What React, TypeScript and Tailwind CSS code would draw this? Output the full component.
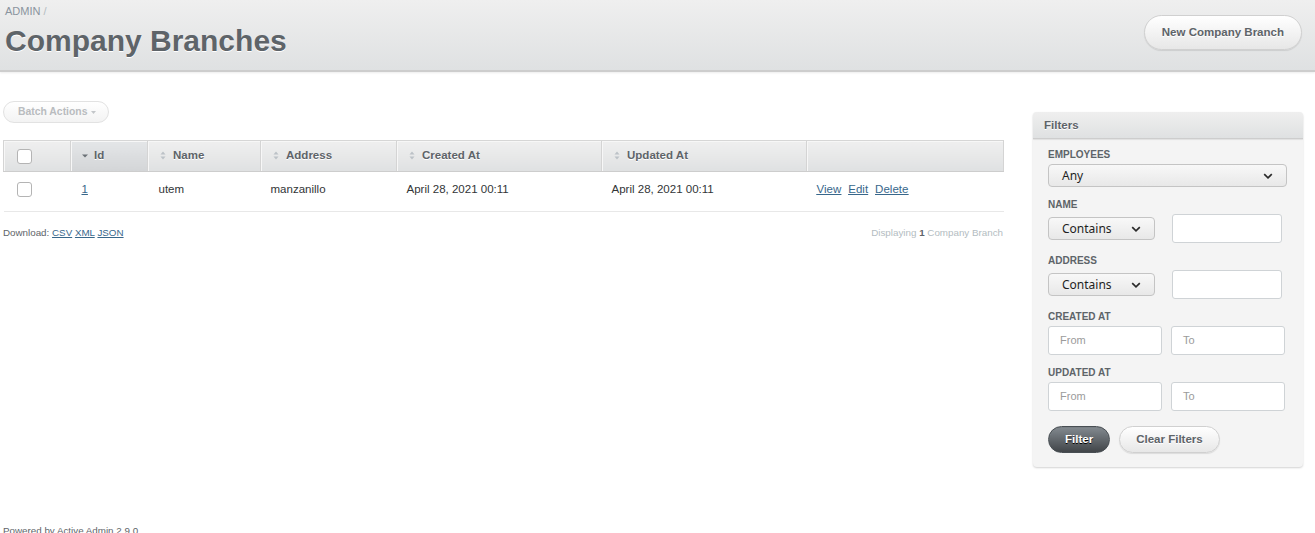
import React from 'react';

const SortBoth = () => (
  <svg width="6" height="9" viewBox="0 0 6 9" className="shrink-0">
    <path d="M3 0.5L5.5 3.5H0.5Z M0.5 5.5H5.5L3 8.5Z" fill="#bcc2c7" />
  </svg>
);

const SortDesc = () => (
  <svg width="6" height="4" viewBox="0 0 6 4" className="shrink-0">
    <path d="M0 0.5H6L3 3.5Z" fill="#6b7177" />
  </svg>
);

const Chevron = () => (
  <svg width="10" height="6" viewBox="0 0 10 6" className="shrink-0">
    <path d="M1.2 1.2L5 4.8L8.8 1.2" fill="none" stroke="#2a2a2a" strokeWidth="1.7" />
  </svg>
);

const Checkbox = () => (
  <span className="block w-[15px] h-[15px] rounded-[3px] border border-[#b4b4b4] bg-white" />
);

const Label = ({ children }: { children: React.ReactNode }) => (
  <div className="text-[10px] leading-[14px] font-bold uppercase text-[#5e6469] mb-[2px]">{children}</div>
);

const Select = ({ value, width }: { value: string; width: string }) => (
  <div
    className={`${width} h-[23px] shrink-0 rounded-[4px] border border-[#c4c4c4] bg-[linear-gradient(180deg,#f8f8f8,#e8e8e8)] flex items-center justify-between pl-[13px] pr-[13px] font-['Noto_Sans',sans-serif] text-[12px] text-[#1f1f1f]`}
  >
    <span>{value}</span>
    <Chevron />
  </div>
);

const Input = ({ placeholder, width }: { placeholder?: string; width: string }) => (
  <div
    className={`${width} h-[29px] shrink-0 rounded-[3px] border border-[#cfd3d6] bg-white flex items-center pl-[11px] text-[11px] text-[#9b9b9b]`}
  >
    {placeholder}
  </div>
);

const columns = [
  { label: 'Id', sorted: true },
  { label: 'Name' },
  { label: 'Address' },
  { label: 'Created At' },
  { label: 'Updated At' },
];

const thBase =
  'h-[31px] p-0 text-left align-middle border-t border-b border-l border-t-[#d6d6d6] border-b-[#cdcdcd] border-l-[#d4d4d4] shadow-[inset_1px_1px_0_#f7f7f7]';

export default function App() {
  return (
    <div className="min-h-[533px] bg-white font-['Liberation_Sans',Arial,sans-serif] text-[#323537]">
      {/* title bar */}
      <div className="h-[72px] flex justify-between pl-[5px] pr-[13px] border-b-2 border-[#cdcdcd] bg-[linear-gradient(180deg,#efefef,#dfe1e2)] shadow-[0_1px_2px_rgba(0,0,0,0.08)]">
        <div className="pt-[5px]">
          <div className="text-[11px] leading-[13px] text-[#8a949e]">
            ADMIN <span className="text-[#b3bcc1]">/</span>
          </div>
          <h2 className="mt-[8px] text-[30px] leading-[30px] font-bold text-[#5e6469] [text-shadow:0_1px_0_#fff]">
            Company Branches
          </h2>
        </div>
        <div className="pt-[15px]">
          <a className="flex items-center h-[35px] px-[17px] rounded-full border border-[#d0d0d0] bg-[linear-gradient(180deg,#ffffff,#e7e7e7)] shadow-[0_1px_1px_rgba(0,0,0,0.1)] text-[11.52px] font-bold text-[#5e6469] [text-shadow:0_1px_0_#fff]">
            New Company Branch
          </a>
        </div>
      </div>

      {/* main */}
      <div className="flex items-start pl-[3px] pr-[12px]">
        <div className="w-[1000px] pt-[29px]">
          <div className="w-[106px] h-[22px] rounded-full border border-[#e2e2e2] bg-[linear-gradient(180deg,#ffffff,#f3f3f3)] flex items-center pl-[14px] gap-[4px] text-[10.4px] font-bold text-[#b9bcbf]">
            Batch Actions
            <svg width="5" height="3" viewBox="0 0 5 3">
              <path d="M0 0H5L2.5 3Z" fill="#c3c6c9" />
            </svg>
          </div>

          <table className="mt-[17px] w-[1000px] table-fixed border-collapse">
            <colgroup>
              <col className="w-[67px]" />
              <col className="w-[77px]" />
              <col className="w-[113px]" />
              <col className="w-[136px]" />
              <col className="w-[205px]" />
              <col className="w-[205px]" />
              <col className="w-[197px]" />
            </colgroup>
            <thead>
              <tr className="text-[11.52px] font-bold text-[#5e6469] [text-shadow:0_1px_0_#fff]">
                <th className={`${thBase} pl-[13px] bg-[linear-gradient(180deg,#efefef,#dfe1e2)]`}>
                  <Checkbox />
                </th>
                {columns.map((c) => (
                  <th
                    key={c.label}
                    className={`${thBase} ${
                      c.sorted
                        ? 'pl-[11px] bg-[linear-gradient(180deg,#e4e6e8,#d3d5d7)]'
                        : 'pl-[12px] bg-[linear-gradient(180deg,#efefef,#dfe1e2)]'
                    }`}
                  >
                    <div className={`flex items-center ${c.sorted ? 'gap-[6px]' : 'gap-[7px]'}`}>
                      {c.sorted ? <SortDesc /> : <SortBoth />}
                      <span>{c.label}</span>
                    </div>
                  </th>
                ))}
                <th className={`${thBase} border-r border-r-[#d4d4d4] bg-[linear-gradient(180deg,#efefef,#dfe1e2)]`} />
              </tr>
            </thead>
            <tbody>
              <tr className="text-[11.52px] leading-[16px] text-[#323537]">
                <td className="h-[40px] align-top pt-[10px] pl-[13px] border-b border-[#e8e8e8]">
                  <Checkbox />
                </td>
                <td className="h-[40px] align-top pt-[9px] pl-[11px] border-b border-[#e8e8e8]">
                  <a className="text-[#38678b] underline">1</a>
                </td>
                <td className="align-top pt-[9px] pl-[11px] border-b border-[#e8e8e8]">utem</td>
                <td className="align-top pt-[9px] pl-[10px] border-b border-[#e8e8e8]">manzanillo</td>
                <td className="align-top pt-[9px] pl-[10px] border-b border-[#e8e8e8]">April 28, 2021 00:11</td>
                <td className="align-top pt-[9px] pl-[10px] border-b border-[#e8e8e8]">April 28, 2021 00:11</td>
                <td className="align-top pt-[9px] pl-[10px] border-b border-[#e8e8e8]">
                  <div className="flex gap-[7px] text-[#38678b] underline">
                    <a>View</a>
                    <a>Edit</a>
                    <a>Delete</a>
                  </div>
                </td>
              </tr>
            </tbody>
          </table>

          <div className="mt-[14px] flex justify-between text-[9.8px] leading-[14px]">
            <div className="text-[#5e6469]">
              Download:{' '}
              <a className="text-[#38678b] underline">CSV</a>{' '}
              <a className="text-[#38678b] underline">XML</a>{' '}
              <a className="text-[#38678b] underline">JSON</a>
            </div>
            <div className="text-[#b3bcc1]">
              Displaying <b className="text-[#5e6469]">1</b> Company Branch
            </div>
          </div>
        </div>

        {/* sidebar */}
        <div className="w-[270px] ml-[30px] mt-[40px] rounded-[4px] bg-[#f4f4f4] shadow-[0_1px_2px_rgba(0,0,0,0.18)]">
          <h3 className="h-[27px] leading-[27px] px-[11px] rounded-t-[4px] border-b border-[#cdcdcd] bg-[linear-gradient(180deg,#efefef,#dfe1e2)] text-[11.52px] font-bold text-[#5e6469] [text-shadow:0_1px_0_#fff] shadow-[0_1px_1px_rgba(0,0,0,0.08)]">
            Filters
          </h3>
          <div className="px-[15px] pt-[9px] pb-[14px]">
            <Label>Employees</Label>
            <Select value="Any" width="w-[239px]" />

            <div className="mt-[11px]">
              <Label>Name</Label>
              <div className="flex items-center">
                <Select value="Contains" width="w-[107px]" />
                <div className="ml-[17px]">
                  <Input width="w-[110px]" />
                </div>
              </div>
            </div>

            <div className="mt-[11px]">
              <Label>Address</Label>
              <div className="flex items-center">
                <Select value="Contains" width="w-[107px]" />
                <div className="ml-[17px]">
                  <Input width="w-[110px]" />
                </div>
              </div>
            </div>

            <div className="mt-[11px]">
              <Label>Created At</Label>
              <div className="flex gap-[9px]">
                <Input placeholder="From" width="w-[114px]" />
                <Input placeholder="To" width="w-[114px]" />
              </div>
            </div>

            <div className="mt-[11px]">
              <Label>Updated At</Label>
              <div className="flex gap-[9px]">
                <Input placeholder="From" width="w-[114px]" />
                <Input placeholder="To" width="w-[114px]" />
              </div>
            </div>

            <div className="mt-[15px] flex gap-[9px]">
              <button className="h-[27px] px-[16px] rounded-full border border-[#484e53] bg-[linear-gradient(180deg,#838a90,#414549)] text-[11.52px] font-bold text-white [text-shadow:0_1px_0_#000] shadow-[inset_0_1px_0_#7a8085]">
                Filter
              </button>
              <button className="h-[27px] px-[16px] rounded-full border border-[#d0d0d0] bg-[linear-gradient(180deg,#ffffff,#e7e7e7)] text-[11.52px] font-bold text-[#5e6469] [text-shadow:0_1px_0_#fff] shadow-[0_1px_1px_rgba(0,0,0,0.1)]">
                Clear Filters
              </button>
            </div>
          </div>
        </div>
      </div>

      <div className="mt-[58px] pl-[3px] text-[9.8px] leading-[12px] text-[#5e6469]">
        Powered by <a className="text-[#5e6469]">Active Admin</a> 2.9.0
      </div>
    </div>
  );
}
